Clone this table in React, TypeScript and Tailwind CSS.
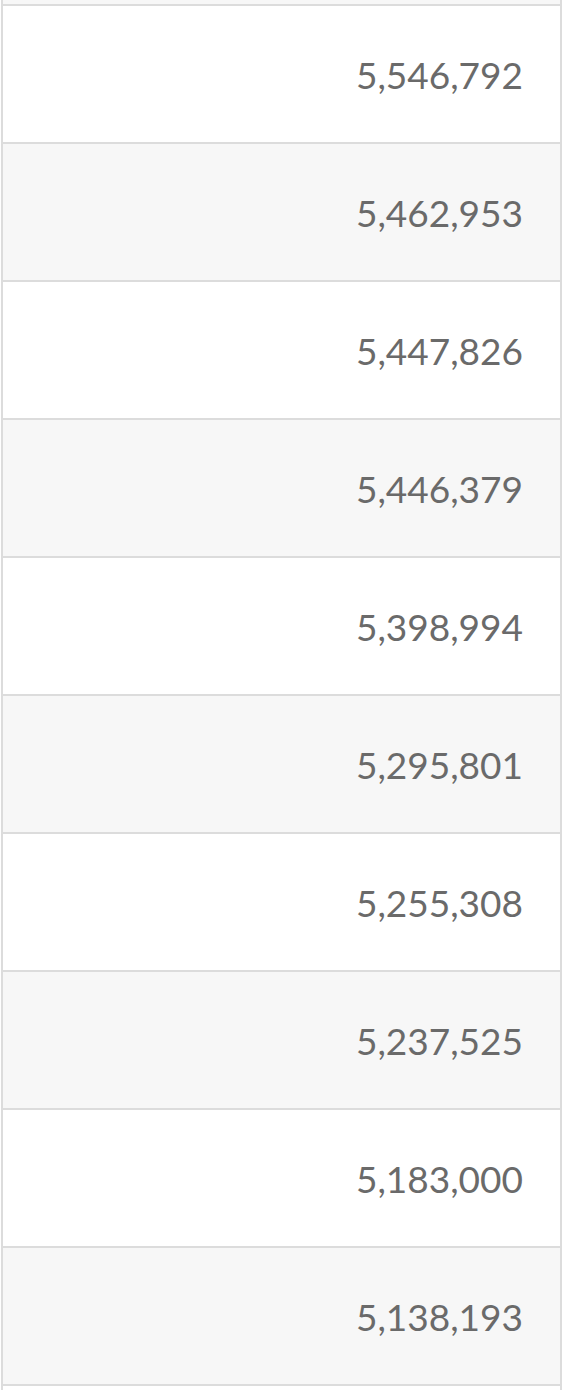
import React from "react";

const values = [
  "5,546,792",
  "5,462,953",
  "5,447,826",
  "5,446,379",
  "5,398,994",
  "5,295,801",
  "5,255,308",
  "5,237,525",
  "5,183,000",
  "5,138,193",
];

export default function App() {
  return (
    <div className="h-[1390px] w-[565px] overflow-hidden bg-white">
      <div className="ml-[1px] w-[561px] border-x-2 border-[#dcdcdc]">
        <div className="h-[4px] bg-[#f7f7f7]" />
        {values.map((v, i) => (
          <div
            key={v}
            className={`flex h-[138px] items-center justify-end border-t-2 border-[#dcdcdc] pr-[37px] ${
              i % 2 === 1 ? "bg-[#f7f7f7]" : "bg-white"
            }`}
          >
            <span
              className="text-[37px] font-normal leading-none text-[#6a6a6a]"
              style={{ fontFamily: "Lato, 'Open Sans', sans-serif" }}
            >
              {v}
            </span>
          </div>
        ))}
        <div className="h-[10px] border-t-2 border-[#dcdcdc] bg-white" />
      </div>
    </div>
  );
}
